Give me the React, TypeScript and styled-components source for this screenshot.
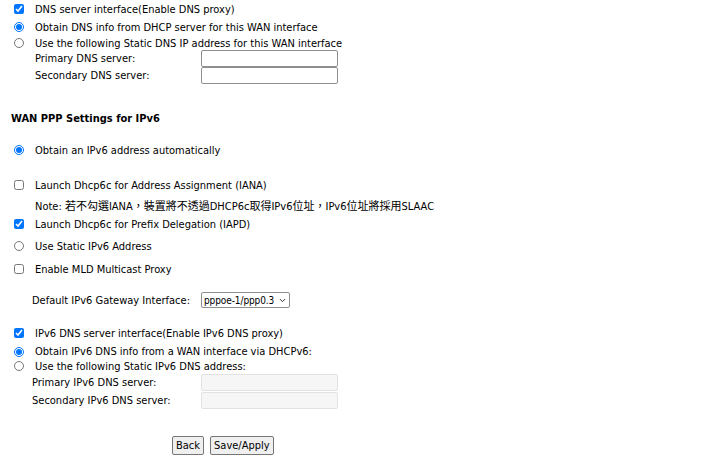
import styled, { createGlobalStyle } from 'styled-components';
import { ChevronDown } from 'lucide-react';

const Global = createGlobalStyle`
  html, body {
    margin: 0;
    padding: 0;
    background: #ffffff;
  }
  body {
    font-family: 'DejaVu Sans Condensed', 'DejaVu Sans', 'Noto Sans CJK TC', sans-serif;
    font-size: 11px;
    color: #000000;
  }
`;

// inputs and the select all start at this x in the form table
const FIELD_X = 201;

export default () => {
  return (
    <Page>
      <Global />
      <Row h={18}>
        <Check defaultChecked />
        <Label>DNS server interface(Enable DNS proxy)</Label>
      </Row>
      <Row h={18}>
        <Radio name='dns' defaultChecked />
        <Label>Obtain DNS info from DHCP server for this WAN interface</Label>
      </Row>
      <Row h={14}>
        <Radio name='dns' />
        <Label>Use the following Static DNS IP address for this WAN interface</Label>
      </Row>
      <FieldRow h={17} indent={35}>
        <FieldLabel indent={35}>Primary DNS server:</FieldLabel>
        <TextBox />
      </FieldRow>
      <FieldRow h={17} indent={35}>
        <FieldLabel indent={35}>Secondary DNS server:</FieldLabel>
        <TextBox />
      </FieldRow>

      <Heading>WAN PPP Settings for IPv6</Heading>

      <Row h={20} top={12}>
        <Radio name='addr' defaultChecked />
        <Label>Obtain an IPv6 address automatically</Label>
      </Row>
      <Row h={20} top={15}>
        <Check />
        <Label>Launch Dhcp6c for Address Assignment (IANA)</Label>
      </Row>
      <Row h={20}>
        <Note>Note: 若不勾選IANA，裝置將不透過DHCP6c取得IPv6位址，IPv6位址將採用SLAAC</Note>
      </Row>
      <Row h={18}>
        <Check defaultChecked />
        <Label>Launch Dhcp6c for Prefix Delegation (IAPD)</Label>
      </Row>
      <Row h={18} top={4}>
        <Radio name='static' />
        <Label>Use Static IPv6 Address</Label>
      </Row>
      <Row h={18} top={5}>
        <Check />
        <Label>Enable MLD Multicast Proxy</Label>
      </Row>
      <FieldRow h={18} top={13} indent={32}>
        <FieldLabel indent={32}>Default IPv6 Gateway Interface:</FieldLabel>
        <SelectWrap>
          <Select defaultValue='ppp0.3'>
            <option value='ppp0.3'>pppoe-1/ppp0.3</option>
          </Select>
          <Chevron size={9} strokeWidth={2.5} />
        </SelectWrap>
      </FieldRow>

      <Row h={18} top={15}>
        <Check defaultChecked />
        <Label>IPv6 DNS server interface(Enable IPv6 DNS proxy)</Label>
      </Row>
      <Row h={15} top={2}>
        <Radio name='dns6' defaultChecked />
        <Label>Obtain IPv6 DNS info from a WAN interface via DHCPv6:</Label>
      </Row>
      <Row h={14}>
        <Radio name='dns6' />
        <Label>Use the following Static IPv6 DNS address:</Label>
      </Row>
      <FieldRow h={18} indent={32}>
        <FieldLabel indent={32}>Primary IPv6 DNS server:</FieldLabel>
        <TextBox disabled />
      </FieldRow>
      <FieldRow h={18} indent={32}>
        <FieldLabel indent={32}>Secondary IPv6 DNS server:</FieldLabel>
        <TextBox disabled />
      </FieldRow>

      <Buttons>
        <Button>Back</Button>
        <Button>Save/Apply</Button>
      </Buttons>
    </Page>
  );
};

const Page = styled.div`
  width: 720px;
  height: 458px;
  overflow: hidden;
  display: flex;
  flex-direction: column;
`;

const Row = styled.div<{ h: number; top?: number }>`
  display: flex;
  align-items: center;
  height: ${(p) => p.h}px;
  margin-top: ${(p) => p.top || 0}px;
  padding-left: 14px;
  white-space: nowrap;
`;

const FieldRow = styled.div<{ h: number; top?: number; indent: number }>`
  display: flex;
  align-items: center;
  height: ${(p) => p.h}px;
  margin-top: ${(p) => p.top || 0}px;
  padding-left: ${(p) => p.indent}px;
  white-space: nowrap;
`;

const FieldLabel = styled.span<{ indent: number }>`
  width: ${(p) => FIELD_X - p.indent}px;
  flex: none;
`;

const Label = styled.span`
  margin-left: 11px;
`;

const Note = styled.span`
  margin-left: 21px;
`;

const Check = styled.input.attrs({ type: 'checkbox', readOnly: true })`
  margin: 0;
  width: 10px;
  height: 10px;
  accent-color: #0075ff;
`;

const Radio = styled.input.attrs({ type: 'radio', readOnly: true })`
  margin: 0;
  width: 10px;
  height: 10px;
  accent-color: #0075ff;
`;

const TextBox = styled.input.attrs({ type: 'text' })`
  box-sizing: border-box;
  width: 137px;
  height: 17px;
  margin: 0;
  padding: 0 3px;
  border: 1px solid #8f8f8f;
  border-radius: 2px;
  background: #ffffff;
  &:disabled {
    border-color: #e2e2e2;
    background: #f6f6f6;
  }
`;

const SelectWrap = styled.div`
  position: relative;
  display: flex;
  align-items: center;
  width: 89px;
  height: 16px;
`;

const Select = styled.select`
  appearance: none;
  box-sizing: border-box;
  width: 100%;
  height: 100%;
  margin: 0;
  padding: 0 0 0 2px;
  font-family: 'DejaVu Sans Condensed', 'DejaVu Sans', sans-serif;
  font-size: 10px;
  letter-spacing: -0.1px;
  border: 1px solid #8f8f8f;
  border-radius: 2px;
  background: #ffffff;
  color: #000000;
`;

const Chevron = styled(ChevronDown)`
  position: absolute;
  right: 3px;
  top: 4px;
  color: #222222;
  pointer-events: none;
`;

const Heading = styled.div`
  height: 20px;
  margin-top: 24px;
  padding-left: 11px;
  display: flex;
  align-items: center;
  font-weight: bold;
`;

const Buttons = styled.div`
  display: flex;
  gap: 6px;
  margin-top: 27px;
  padding-left: 172px;
`;

const Button = styled.button`
  box-sizing: border-box;
  height: 19px;
  padding: 0 3px;
  font-family: 'DejaVu Sans Condensed', 'DejaVu Sans', sans-serif;
  font-size: 11px;
  color: #000000;
  background: #efefef;
  border: 1px solid #767676;
  border-radius: 2px;
`;
